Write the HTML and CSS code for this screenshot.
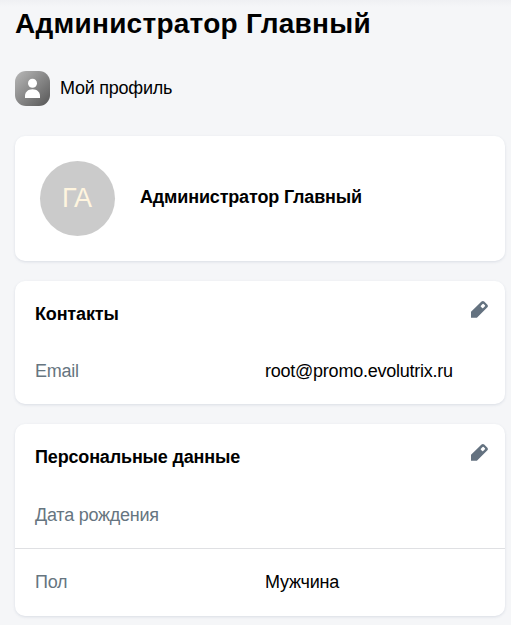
FILE: index.html
```html
<!DOCTYPE html>
<html lang="ru">
<head>
    <meta charset="UTF-8">
    <meta name="viewport" content="width=device-width, initial-scale=1.0">
    <title>Администратор Главный</title>
    <link rel="stylesheet" href="styles.css">
</head>
<body>

<h1>Администратор Главный</h1>

<div class="profile-link">
    <svg class="profile-icon" viewBox="0 0 35 35">
        <defs>
            <linearGradient id="grey" x1="0" y1="0" x2="1" y2="1">
                <stop offset="0" stop-color="#b9b9b9"/>
                <stop offset="1" stop-color="#565656"/>
            </linearGradient>
        </defs>
        <rect width="35" height="35" rx="11" fill="url(#grey)"/>
        <circle cx="17.5" cy="12.2" r="4.5" fill="#fff"/>
        <path d="M10 27v-2c0-4 3-6.800 7.500-6.800s7.500 2.800 7.500 6.800v2z" fill="#fff"/>
    </svg>
    <span>Мой профиль</span>
</div>

<section class="card user">
    <div class="avatar">ГА</div>
    <div class="user-name">Администратор Главный</div>
</section>

<section class="card">
    <div class="card-head">
        <h2>Контакты</h2>
        <svg class="edit" viewBox="0 0 18 18">
            <path fill-rule="evenodd" d="M1 16.700V10.800L11.500.5q1.400-1 2.700 0l3.200 3.200q1 1.300 0 2.600L6.900 16.700zM12.600 3l-1.700 1.700q-.5.500 0 1l1.300 1.300q.5.500 1 0l1.700-1.700q.4-.5 0-1l-1.300-1.300q-.5-.5-1 0z" fill="#647280"/>
        </svg>
    </div>
    <div class="row">
        <div class="label">Email</div>
        <div class="value">root@promo.evolutrix.ru</div>
    </div>
</section>

<section class="card">
    <div class="card-head">
        <h2>Персональные данные</h2>
        <svg class="edit" viewBox="0 0 18 18">
            <path fill-rule="evenodd" d="M1 16.700V10.800L11.500.5q1.400-1 2.700 0l3.200 3.200q1 1.300 0 2.600L6.900 16.700zM12.600 3l-1.700 1.700q-.5.500 0 1l1.300 1.300q.5.500 1 0l1.700-1.700q.4-.5 0-1l-1.300-1.300q-.5-.5-1 0z" fill="#647280"/>
        </svg>
    </div>
    <div class="row birth">
        <div class="label">Дата рождения</div>
        <div class="value"></div>
    </div>
    <div class="row gender">
        <div class="label">Пол</div>
        <div class="value">Мужчина</div>
    </div>
</section>

</body>
</html>
```
FILE: styles.css
```css
* {
    box-sizing: border-box;
}
body {
    margin: 0;
    padding: 7px 6px 0 15px;
    background: #f5f6f8 linear-gradient(#eff0f3, #f5f6f8) no-repeat 0 0 / 100% 7px;
    color: #000;
    font-family: "Liberation Sans", Arial, sans-serif;
    font-size: 18px;
    line-height: 24px;
    letter-spacing: -0.24px;
}
h1 {
    margin: 0;
    font-size: 28px;
    line-height: 34px;
    letter-spacing: 0.26px;
}
h2 {
    margin: 0;
    font-size: 18px;
    line-height: 24px;
    letter-spacing: -0.16px;
}
.profile-link {
    display: flex;
    align-items: center;
    gap: 10px;
    margin: 30px 0;
}
.profile-link span {
    padding-bottom: 2px;
}
.profile-icon {
    width: 35px;
    height: 35px;
}
.card {
    margin-bottom: 20px;
    background-color: #fff;
    border-radius: 10px;
    box-shadow: 0 1px 3px rgba(60, 80, 110, 0.14);
}
.user {
    display: flex;
    align-items: center;
    gap: 25px;
    height: 125px;
    padding: 0 25px;
}
.avatar {
    width: 75px;
    height: 75px;
    padding-right: 2px;
    border-radius: 50%;
    background-color: #cbcbcb;
    color: #fff5df;
    font-size: 27px;
    line-height: 74px;
    text-align: center;
    letter-spacing: -0.8px;
}
.user-name {
    padding-bottom: 3px;
    font-weight: bold;
    letter-spacing: -0.16px;
}
.card-head {
    display: flex;
    justify-content: space-between;
    padding: 20px 17px 0 20px;
}
.card-head h2 {
    padding-top: 1px;
}
.edit {
    width: 18px;
    height: 18px;
}
.row {
    display: flex;
    align-items: center;
    height: 78px;
    padding: 12px 20px 0;
}
.label {
    width: 230px;
    color: #667580;
}
.birth {
    height: 80px;
    padding-top: 13px;
    border-bottom: 1px solid #dfe0e3;
}
.gender {
    height: 67px;
    padding: 0 20px 2px;
}
```
